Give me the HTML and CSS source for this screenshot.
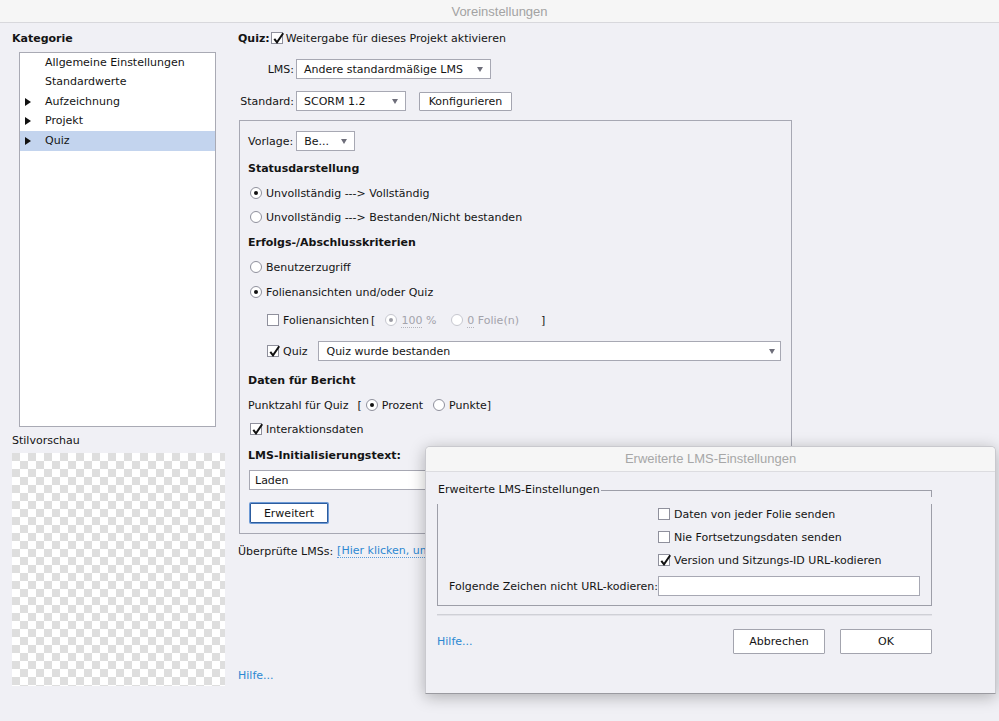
FILE: index.html
```html
<!DOCTYPE html>
<html lang="de">
<head>
<meta charset="utf-8">
<title>Voreinstellungen</title>
<link rel="stylesheet" href="styles.css">
</head>
<body>
<div class="window">
  <header class="titlebar">Voreinstellungen</header>
  <div class="main">
    <aside class="sidebar">
      <div class="heading">Kategorie</div>
      <ul class="cat-list">
        <li class="cat">Allgemeine Einstellungen</li>
        <li class="cat">Standardwerte</li>
        <li class="cat parent">Aufzeichnung</li>
        <li class="cat parent">Projekt</li>
        <li class="cat parent selected">Quiz</li>
      </ul>
      <div class="preview-label">Stilvorschau</div>
      <div class="checker"></div>
    </aside>

    <section class="content">
      <div class="row quiz-row">
        <span class="bold">Quiz:</span>
        <span class="cb cb-quiz"><svg viewBox="0 0 12 12"><path d="M2.3 5.8 L5 9.4 L11.2 0.2"/></svg></span>
        <span>Weitergabe für dieses Projekt aktivieren</span>
      </div>
      <div class="row lms-row">
        <span class="lbl">LMS:</span>
        <div class="select sel-lms"><span>Andere standardmäßige LMS</span><span class="arrow"></span></div>
      </div>
      <div class="row std-row">
        <span class="lbl">Standard:</span>
        <div class="select sel-std"><span>SCORM 1.2</span><span class="arrow"></span></div>
        <button class="btn btn-konf">Konfigurieren</button>
      </div>

      <div class="box">
        <div class="row r-vorlage">
          <span>Vorlage:</span>
          <div class="select sel-vorlage"><span>Be...</span><span class="arrow"></span></div>
        </div>
        <div class="row bold r-status">Statusdarstellung</div>
        <div class="row r-opt1"><span class="radio on"></span><span class="opt-text">Unvollständig ---&gt; Vollständig</span></div>
        <div class="row r-opt2"><span class="radio"></span><span class="opt-text">Unvollständig ---&gt; Bestanden/Nicht bestanden</span></div>
        <div class="row bold r-opt1">Erfolgs-/Abschlusskriterien</div>
        <div class="row r-opt1"><span class="radio"></span><span class="opt-text">Benutzerzugriff</span></div>
        <div class="row r-opt1"><span class="radio on"></span><span class="opt-text">Folienansichten und/oder Quiz</span></div>
        <div class="row indent r-folien">
          <span class="cb"></span>
          <span class="opt-text">Folienansichten</span>
          <span class="bracket-open">[</span>
          <span class="radio on disabled r-100"></span>
          <span class="dis"><span class="dotted">100</span> %</span>
          <span class="radio disabled r-0"></span>
          <span class="dis"><span class="dotted">0</span> Folie(n)</span>
          <span class="bracket-close">]</span>
        </div>
        <div class="row indent r-quiz">
          <span class="cb"><svg viewBox="0 0 12 12"><path d="M2.3 5.8 L5 9.4 L11.2 0.2"/></svg></span>
          <span class="opt-text">Quiz</span>
          <div class="select sel-quiz"><span>Quiz wurde bestanden</span><span class="arrow"></span></div>
        </div>
        <div class="row bold r-daten">Daten für Bericht</div>
        <div class="row r-opt1">
          <span>Punktzahl für Quiz</span>
          <span class="bracket-p">[</span>
          <span class="radio on r-proz"></span>
          <span class="opt-text">Prozent</span>
          <span class="radio r-punkte"></span>
          <span class="opt-text">Punkte</span><span>]</span>
        </div>
        <div class="row r-opt2">
          <span class="cb cb-inter"><svg viewBox="0 0 12 12"><path d="M2.3 5.8 L5 9.4 L11.2 0.2"/></svg></span>
          <span class="opt-text">Interaktionsdaten</span>
        </div>
        <div class="row bold r-init">LMS-Initialisierungstext:</div>
        <div class="textfield tf-laden">Laden</div>
        <button class="btn btn-erw">Erweitert</button>
      </div>

      <div class="row r-verified">
        <span>Überprüfte LMSs:</span>
        <a class="link dotted-link">[Hier klicken, um die Liste anzuzeigen]</a>
      </div>
      <div class="row r-help"><a class="link">Hilfe...</a></div>
    </section>
  </div>
</div>

<div class="dialog">
  <header class="dlg-title">Erweiterte LMS-Einstellungen</header>
  <div class="dlg-body">
    <div class="group">
      <div class="legend-row">
        <span class="legend">Erweiterte LMS-Einstellungen</span>
        <span class="legend-line"></span>
      </div>
      <div class="group-body">
        <div class="row g-row g-first"><span class="cb"></span><span class="opt-text">Daten von jeder Folie senden</span></div>
        <div class="row g-row"><span class="cb"></span><span class="opt-text">Nie Fortsetzungsdaten senden</span></div>
        <div class="row g-row"><span class="cb"><svg viewBox="0 0 12 12"><path d="M2.3 5.8 L5 9.4 L11.2 0.2"/></svg></span><span class="opt-text">Version und Sitzungs-ID URL-kodieren</span></div>
        <div class="row g-input-row">
          <span class="g-label">Folgende Zeichen nicht URL-kodieren:</span>
          <div class="textfield tf-chars"></div>
        </div>
      </div>
    </div>
    <div class="separator"></div>
    <div class="row dlg-footer">
      <a class="link">Hilfe...</a>
      <button class="btn btn-dlg btn-cancel">Abbrechen</button>
      <button class="btn btn-dlg btn-ok">OK</button>
    </div>
  </div>
</div>
</body>
</html>
```

FILE: styles.css
```css
* { box-sizing: border-box; }

html, body {
  margin: 0;
  padding: 0;
}

body {
  width: 999px;
  height: 721px;
  overflow: hidden;
  position: relative;
  background: #f0f0f5;
  font-family: "DejaVu Sans", "Noto Sans", sans-serif;
  font-size: 11px;
  color: #141414;
}

.bold { font-weight: bold; }

.titlebar {
  height: 23px;
  background: #f6f6f6;
  border-bottom: 1px solid #d8d8dc;
  text-align: center;
  line-height: 23px;
  font-family: "Liberation Sans", Arial, sans-serif;
  font-size: 13px;
  color: #a3a3a3;
}

.main {
  display: flex;
  height: 698px;
}

/* ---------- sidebar ---------- */
.sidebar {
  width: 238px;
  flex: none;
  padding-left: 12px;
  display: flex;
  flex-direction: column;
}

.heading {
  font-weight: bold;
  line-height: 15px;
  margin-top: 8px;
}

.cat-list {
  list-style: none;
  margin: 6px 0 0 7px;
  padding: 0;
  width: 197px;
  height: 375px;
  background: #fff;
  border: 1px solid #a9aab4;
}

.cat {
  height: 19.5px;
  line-height: 19.5px;
  padding-left: 25px;
  padding-bottom: 1px;
  display: flex;
  align-items: center;
  position: relative;
  white-space: nowrap;
}

.cat.parent::before {
  content: "";
  position: absolute;
  left: 5px;
  top: 5.5px;
  border-left: 6px solid #111;
  border-top: 4px solid transparent;
  border-bottom: 4px solid transparent;
}

.cat.selected {
  background: #c3d4ee;
}

.preview-label {
  margin-top: 7px;
  line-height: 14px;
}

.checker {
  margin-top: 5px;
  width: 213px;
  height: 233px;
  background: repeating-conic-gradient(#fff 0 25%, #dedede 0 50%) 0 0 / 16px 16px;
}

/* ---------- content ---------- */
.content {
  flex: 1;
  display: flex;
  flex-direction: column;
  padding-top: 5px;
}

.row {
  display: flex;
  align-items: center;
  height: 20px;
  white-space: nowrap;
  flex: none;
}

.quiz-row .cb-quiz { margin: 0 3px 0 1px; }

.lms-row { margin-top: 11px; }
.std-row { margin-top: 12px; }

.lbl {
  width: 56px;
  text-align: right;
  margin-right: 2px;
}

.select {
  height: 20px;
  background: #fff;
  border: 1px solid #a7a8b3;
  padding: 0 7px 0 7px;
  display: flex;
  align-items: center;
  justify-content: space-between;
  white-space: nowrap;
  overflow: hidden;
}

.arrow {
  width: 0;
  height: 0;
  border-top: 5px solid #6e6e7a;
  border-left: 3.5px solid transparent;
  border-right: 3.5px solid transparent;
  margin-left: 6px;
  flex: none;
}

.sel-lms { width: 195px; }
.sel-std { width: 110px; }
.sel-vorlage { width: 59px; margin-left: 3px; }
.sel-quiz { width: 463px; margin-left: 11px; height: 20px; padding-right: 5px; }

.btn {
  font-family: inherit;
  font-size: 11px;
  color: #141414;
  background: #fff;
  border: 1px solid #a4a5b0;
  border-radius: 1px;
  height: 19px;
  padding: 0;
  margin: 0;
}

.btn-konf {
  width: 93px;
  margin-left: 13px;
}

.box {
  margin: 9px 0 0 1px;
  width: 553px;
  height: 414px;
  border: 1px solid #a7a8b3;
  padding-left: 8px;
  display: flex;
  flex-direction: column;
  align-items: flex-start;
  flex: none;
}

.r-vorlage { margin-top: 10px; }
.r-status { margin-top: 7px; }
.r-opt1 { margin-top: 5px; }
.r-opt2 { margin-top: 4px; }
.r-folien { margin-top: 8px; }
.r-quiz { margin-top: 11px; }
.r-daten { margin-top: 9px; }
.r-init { margin-top: 6px; }

.indent { padding-left: 19px; }

.radio {
  width: 12px;
  height: 12px;
  border-radius: 50%;
  border: 1px solid #8f909c;
  background: #fff;
  display: inline-grid;
  place-items: center;
  flex: none;
  margin-left: 2px;
}

.radio.on::after {
  content: "";
  width: 4px;
  height: 4px;
  border-radius: 50%;
  background: #111;
}

.radio.disabled {
  border-color: #c6c7cf;
}
.radio.disabled.on::after { background: #9c9ca4; }

.opt-text { margin-left: 4px; }

.cb {
  width: 12px;
  height: 12px;
  border: 1px solid #8f909c;
  background: #fff;
  display: inline-grid;
  place-items: center;
  flex: none;
}

.cb svg {
  width: 12px;
  height: 12px;
  overflow: visible;
}

.cb svg path {
  fill: none;
  stroke: #111;
  stroke-width: 2;
  stroke-linecap: butt;
  stroke-linejoin: miter;
}

.bracket-open { margin-left: 2px; }
.r-100 { margin-left: 10px; }
.r-0 { margin-left: 15px; }
.dis { color: #a3a3ab; margin-left: 4px; }
.dotted { border-bottom: 1px dotted #b5b5bd; line-height: 12px; }
.bracket-close { margin-left: 22px; }

.bracket-p { margin-left: 9px; }
.r-proz { margin-left: 4px; }
.r-punkte { margin-left: 10px; }

.cb-inter { margin-left: 2px; }

.textfield {
  height: 20px;
  background: #fff;
  border: 1px solid #a7a8b3;
  padding-left: 5px;
  display: flex;
  align-items: center;
  flex: none;
}

.tf-laden {
  width: 532px;
  margin: 5px 0 0 1px;
}

.btn-erw {
  width: 78px;
  height: 20px;
  margin: 13px 0 0 2px;
  border: 1px solid #2c5c9e;
  box-shadow: 0 0 0 1px #6e9bd6;
}

.r-verified { margin-top: 7px; }

.link {
  color: #2d88d2;
  text-decoration: none;
}

.dotted-link {
  margin-left: 4px;
  border-bottom: 1px dotted #5a9bd8;
  line-height: 13px;
}

.r-help { margin-top: 104px; }

/* ---------- dialog ---------- */
.dialog {
  position: absolute;
  left: 425px;
  top: 446px;
  width: 571px;
  height: 248px;
  background: #f0f0f5;
  border: 1px solid #c9c9ce;
  border-bottom-color: #9a9aa0;
  border-radius: 5px 5px 0 0;
  box-shadow: 0 3px 16px rgba(0, 0, 0, 0.28);
  overflow: hidden;
}

.dlg-title {
  height: 25px;
  line-height: 24px;
  background: #f6f6f6;
  border-bottom: 1px solid #dcdce0;
  text-align: center;
  font-family: "Liberation Sans", Arial, sans-serif;
  font-size: 13px;
  color: #a7a7a7;
}

.dlg-body {
  padding: 11px 0 0 11px;
  width: 507px;
}

.group { width: 495px; }

.legend-row {
  display: flex;
  height: 14px;
  line-height: 14px;
}

.legend { white-space: nowrap; padding-left: 1px; }

.legend-line {
  flex: 1;
  height: 7px;
  align-self: flex-end;
  border-top: 1px solid #9d9ea8;
  border-right: 1px solid #9d9ea8;
  margin-left: 1px;
}

.group-body {
  border: 1px solid #9d9ea8;
  border-top: none;
  padding-bottom: 9px;
}

.g-row { padding-left: 220px; margin-top: 3px; }
.g-first { margin-top: 7px; }

.g-input-row {
  margin-top: 6px;
  padding-left: 9px;
}

.g-label {
  width: 211px;
  text-align: right;
  overflow: visible;
}

.tf-chars { width: 262px; height: 20px; }

.separator {
  margin-top: 8px;
  width: 495px;
  border-top: 1px solid #cfd0d6;
  border-bottom: 1px solid #e2e2e8;
}

.dlg-footer {
  margin-top: 13px;
  height: 25px;
  padding-right: 1px;
}

.btn-dlg {
  width: 92px;
  height: 25px;
  border-color: #a3a4ae;
}

.btn-cancel { margin-left: auto; }
.btn-ok { margin-left: 15px; }
```
